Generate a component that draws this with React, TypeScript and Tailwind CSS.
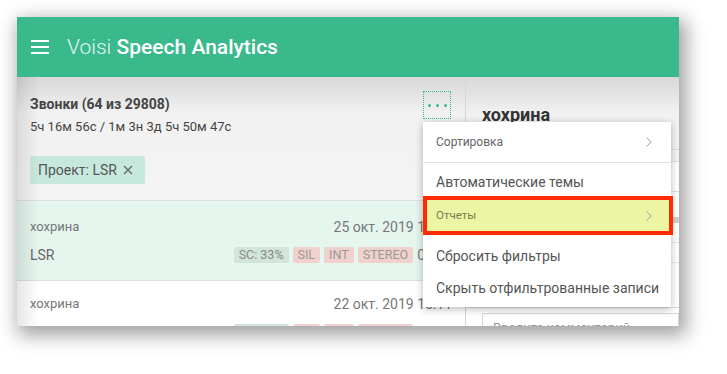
import React from "react";

const redTags = ["SIL", "INT", "STEREO"];

function Chevron() {
  return (
    <svg width="6" height="10" viewBox="0 0 6 10" fill="none" stroke="#9c9c9c" strokeWidth="1">
      <path d="M0.5 0.5 L5.2 5 L0.5 9.5" />
    </svg>
  );
}

function CallRow({ active, date, time }: { active?: boolean; date: string; time: string }) {
  return (
    <div
      className={`h-[80px] shrink-0 border-b border-[#dedede] px-[13px] ${
        active ? "bg-[#e5f6ef] pt-[16px]" : "bg-white pt-[13px]"
      }`}
    >
      <div className="flex h-[20px] items-center justify-between">
        <span className="text-[13px] text-[#777]">хохрина</span>
        <span className="text-[14px] text-[#777]">{date}</span>
      </div>
      <div className="mt-[8px] flex h-[20px] items-center justify-between">
        <span className="text-[14px] text-[#666]">LSR</span>
        <div className="flex items-center gap-[4px]">
          <span className="h-[16px] rounded-[2px] bg-[#d2e5db] px-[5px] text-[12.5px] leading-[16px] text-[#888]">
            SC: 33%
          </span>
          {redTags.map((t) => (
            <span
              key={t}
              className="h-[16px] rounded-[2px] bg-[#f1d1cd] px-[5px] text-[12.5px] leading-[16px] text-[#999]"
            >
              {t}
            </span>
          ))}
          <span className="text-[14px] text-[#777]">{time}</span>
        </div>
      </div>
    </div>
  );
}

export default function App() {
  return (
    <div className="h-[374px] w-[727px] overflow-hidden bg-white pl-[17px] pt-[17px] font-['Roboto',sans-serif]">
      <div className="relative flex h-[309px] w-[662px] flex-col overflow-hidden bg-white shadow-[4px_6px_18px_3px_rgba(0,0,0,0.38)]">
        {/* top bar */}
        <div className="flex h-[60px] shrink-0 items-center bg-[#39b98c] pl-[14px]">
          <svg width="18" height="14" viewBox="0 0 18 14" fill="#fff">
            <rect x="0" y="0" width="18" height="2" />
            <rect x="0" y="6" width="18" height="2" />
            <rect x="0" y="12" width="18" height="2" />
          </svg>
          <div className="ml-[18px] text-[21px] leading-none text-white">
            <span className="font-light text-white/85">Voisi</span>{" "}
            <span className="font-medium">Speech Analytics</span>
          </div>
        </div>

        <div className="flex min-h-0 flex-1">
          {/* calls list */}
          <div className="flex w-[449px] shrink-0 flex-col border-r border-[#d6d6d6]">
            <div className="flex h-[124px] shrink-0 justify-between border-b border-[#dedede] bg-[linear-gradient(to_bottom,#d8d8d8,#f1f1f1_36px,#f4f4f4)] pl-[13px] pr-[14px] pt-[14px]">
              <div className="pt-[3px]">
                <div className="text-[14px] font-bold leading-[20px] text-[#444]">Звонки (64 из 29808)</div>
                <div className="mt-[4px] text-[13px] leading-[18px] text-[#444]">
                  5ч 16м 56с / 1м 3н 3д 5ч 50м 47с
                </div>
                <div className="mt-[20px] flex h-[28px] w-fit items-center rounded-[2px] bg-[#c7e9dd] pl-[8px] pr-[12px] text-[14px] text-[#555]">
                  Проект: LSR
                  <svg className="ml-[6px]" width="10" height="10" viewBox="0 0 10 10" stroke="#666" strokeWidth="1.3">
                    <path d="M1 1 L9 9 M9 1 L1 9" />
                  </svg>
                </div>
              </div>
              <div className="flex h-[28px] w-[28px] items-center justify-center gap-[5px] border border-dotted border-[#39b98c]">
                <span className="h-[3px] w-[3px] rounded-full bg-[#39b98c]" />
                <span className="h-[3px] w-[3px] rounded-full bg-[#39b98c]" />
                <span className="h-[3px] w-[3px] rounded-full bg-[#39b98c]" />
              </div>
            </div>
            <CallRow active date="25 окт. 2019 13:42" time="00:47" />
            <CallRow date="22 окт. 2019 15:11" time="01:12" />
          </div>

          {/* call details */}
          <div className="flex min-w-0 flex-1 flex-col">
            <div className="h-[73px] shrink-0 border-b border-[#dcdcdc] bg-[linear-gradient(to_bottom,#d8d8d8,#f1f1f1_36px,#f4f4f4)] pl-[16px] pt-[26px]">
              <div className="text-[18px] font-bold leading-[24px] text-[#333]">хохрина</div>
            </div>
            <div className="h-[12px] shrink-0 border-b border-[#e0e0e0] bg-[#f4f4f4]" />
            <div className="h-[30px] shrink-0 border-b border-[#e0e0e0]" />
            <div className="h-[31px] shrink-0 border-b-[6px] border-[#d0d0d0]" />
            <div className="h-[20px] shrink-0 border-b border-[#e6e6e6]" />
            <div className="h-[20px] shrink-0 border-b border-[#e6e6e6]" />
            <div className="h-[45px] shrink-0 border-b border-[#dcdcdc]" />
            <div className="ml-[16px] mt-[5px] h-[40px] shrink-0 border border-[#d6d6d6] px-[10px] pt-[6px] text-[13px] leading-[15px] text-[#999]">
              Введите комментарий
            </div>
          </div>
        </div>

        {/* left edge vignette */}
        <div className="pointer-events-none absolute bottom-0 left-0 top-[60px] w-[22px] bg-gradient-to-r from-black/10 to-transparent" />

        {/* dropdown menu */}
        <div className="absolute left-[406px] top-[105px] flex w-[248px] flex-col bg-white pb-[7px] shadow-[0_2px_8px_rgba(0,0,0,0.28)]">
          <div className="flex h-[41px] items-center justify-between border-b border-[#e2e2e2] pl-[13px] pr-[19px] text-[12px] text-[#666]">
            Сортировка
            <Chevron />
          </div>
          <div className="flex h-[33px] items-center pl-[13px] pt-[6px] text-[14px] text-[#555]">Автоматические темы</div>
          <div className="flex h-[39px] w-[250px] items-center justify-between border-[4px] border-[#ff2a00] bg-[#ecf5a4] pl-[9px] pr-[17px] text-[11.5px] text-[#7b7b50]">
            Отчеты
            <Chevron />
          </div>
          <div className="flex h-[42px] items-center pl-[13px] text-[14px] text-[#555]">Сбросить фильтры</div>
          <div className="flex h-[23px] items-center pl-[13px] text-[14px] text-[#555]">
            Скрыть отфильтрованные записи
          </div>
        </div>
      </div>
    </div>
  );
}
